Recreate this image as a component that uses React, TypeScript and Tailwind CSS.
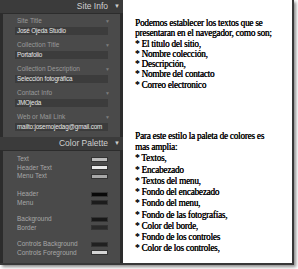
import React from "react";

const sans = { fontFamily: '"Liberation Sans", Arial, sans-serif' };
const serif = { fontFamily: '"Liberation Serif", "Times New Roman", serif' };

function Field({ label, value }: { label: string; value: string }) {
  return (
    <div className="flex flex-col">
      <div className="flex h-[8px] items-center justify-between pl-[14px] pr-[10px]">
        <span className="text-[6.5px] leading-[8px] text-[#9a9a9a]">{label}</span>
        <span className="text-[5px] leading-[8px] text-[#7c7c7c]">▼</span>
      </div>
      <div className="ml-[12px] mt-[2px] flex h-[8px] w-[93px] items-center bg-[#3c3c3c] pl-[2px]">
        <span className="whitespace-nowrap text-[6.3px] leading-[8px] tracking-[-0.15px] text-[#e8e8e8]">{value}</span>
      </div>
    </div>
  );
}

function Swatch({ label, color }: { label: string; color: string }) {
  return (
    <div className="flex h-[8.5px] items-center justify-between pl-[14px] pr-[12px]">
      <span className="text-[6.5px] leading-[8px] text-[#a8a8a8]">{label}</span>
      <span className="h-[5px] w-[17px] border border-[#333]" style={{ backgroundColor: color }} />
    </div>
  );
}

function Header({ title }: { title: string }) {
  return (
    <div className="flex h-[13px] items-center justify-end gap-[6px] bg-[#3b3b3b] pr-[3px]">
      <span className="text-[8.5px] leading-[13px] text-[#cfcfcf]">{title}</span>
      <span className="text-[6px] leading-[13px] text-[#cfcfcf]">▼</span>
    </div>
  );
}

export default function App() {
  const para1 = [
    "Podemos establecer los textos que se",
    "presentaran en el navegador, como son;",
    "* El titulo del sitio,",
    "* Nombre colección,",
    "* Descripción,",
    "* Nombre del contacto",
    "* Correo electronico",
  ];
  const para2 = [
    "Para este estilo la paleta de colores es",
    "mas amplia:",
    "* Textos,",
    "* Encabezado",
    "* Textos del menu,",
    "* Fondo del encabezado",
    "* Fondo del menu,",
    "* Fondo de las fotografías,",
    "* Color del borde,",
    "* Fondo de los controles",
    "* Color de los controles,",
  ];
  return (
    <div className="h-[269px] w-[298px] overflow-hidden bg-white">
      <div className="flex h-[265px] w-[294px] border-b-2 border-r-2 border-[#383838] shadow-[2px_2px_3px_rgba(0,0,0,0.45)]">
        <div className="flex w-[123px] flex-col bg-[#2c2c2c]" style={sans}>
          <Header title="Site Info" />
          <div className="mx-[3px] mt-px flex flex-col gap-[6px] bg-[#4a4a4a] pb-[6px] pt-[3px]">
            <Field label="Site Title" value="José Ojeda Studio" />
            <Field label="Collection Title" value="Portafolio" />
            <Field label="Collection Description" value="Selección fotográfica" />
            <Field label="Contact Info" value="JMOjeda" />
            <Field label="Web or Mail Link" value="mailto:josemojedag@gmail.com" />
          </div>
          <Header title="Color Palette" />
          <div className="mx-[3px] mt-px flex flex-1 flex-col bg-[#4a4a4a] pt-[4px]">
            <Swatch label="Text" color="#bcbcbc" />
            <Swatch label="Header Text" color="#e8e8e8" />
            <Swatch label="Menu Text" color="#a8a8a8" />
            <div className="h-[9.5px]" />
            <Swatch label="Header" color="#080808" />
            <Swatch label="Menu" color="#1c1c1c" />
            <div className="h-[8px]" />
            <Swatch label="Background" color="#181818" />
            <Swatch label="Border" color="#2a2a2a" />
            <div className="h-[8px]" />
            <Swatch label="Controls Background" color="#202020" />
            <Swatch label="Controls Foreground" color="#d4d4d4" />
          </div>
        </div>
        <div className="flex flex-1 flex-col bg-white pl-[12px] pt-[18px] text-black" style={serif}>
          <div className="flex flex-col">
            {para1.map((l) => (
              <div key={l} className="origin-left scale-x-[0.92] whitespace-nowrap text-[10px] leading-[10.3px] tracking-[-0.25px] text-shadow-[0.35px_0_0_rgb(0_0_0)]">{l}</div>
            ))}
          </div>
          <div className="mt-[40px] flex flex-col">
            {para2.map((l) => (
              <div key={l} className="origin-left scale-x-[0.92] whitespace-nowrap text-[10px] leading-[11.2px] tracking-[-0.25px] text-shadow-[0.35px_0_0_rgb(0_0_0)]">{l}</div>
            ))}
          </div>
        </div>
      </div>
    </div>
  );
}
